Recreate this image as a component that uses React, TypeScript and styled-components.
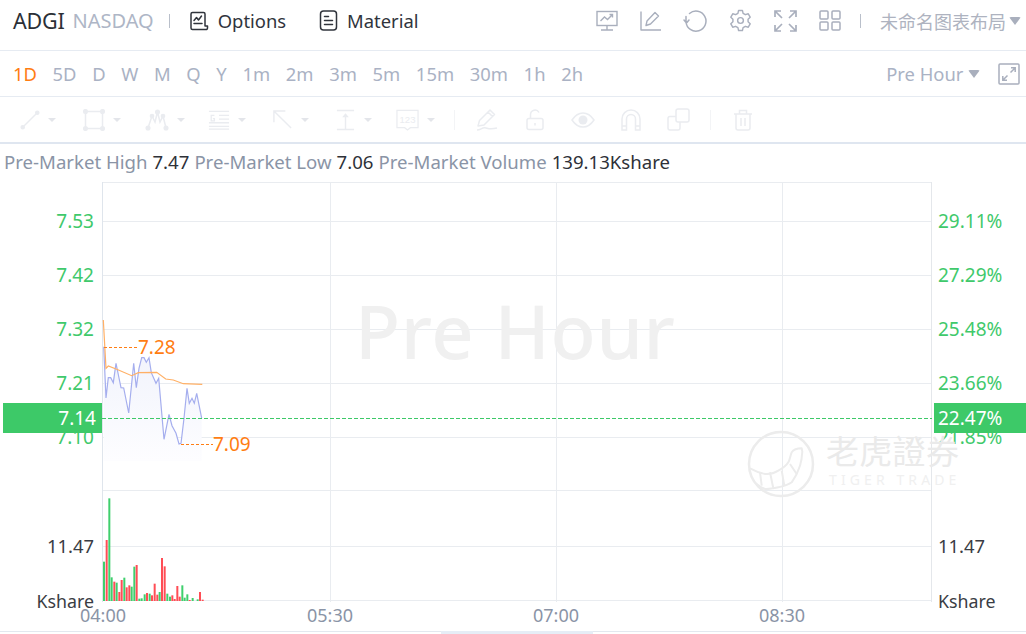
import styled, { createGlobalStyle } from "styled-components";

const GlobalStyle = createGlobalStyle`
  html, body {
    margin: 0;
    background: #fff;
    overflow: hidden;
  }
  body {
    font-family: "Noto Sans", "Noto Sans CJK SC", sans-serif;
  }
`;

const Page = styled.div`
  width: 1026px;
  height: 634px;
  display: flex;
  flex-direction: column;
  overflow: hidden;
`;

const TopBar = styled.div`
  height: 50px;
  flex: none;
  box-sizing: content-box;
  display: flex;
  align-items: center;
  padding: 0 5px 0 13px;
  border-bottom: 1px solid #e6ebf2;
`;

const TopBarInner = styled.div`
  flex: 1;
  display: flex;
  align-items: center;
  height: 42px;
  margin-bottom: 9px;
`;

const Symbol = styled.span`
  font-size: 21.5px;
  color: #2b2f36;
  letter-spacing: -0.2px;
`;

const Exchange = styled.span`
  font-size: 20px;
  color: #aeb6c6;
  margin-left: 8px;
`;

const Divider = styled.span<{ $left?: number; $right?: number }>`
  width: 1px;
  height: 14px;
  background: #b9bfca;
  margin-left: ${(p) => p.$left ?? 0}px;
  margin-right: ${(p) => p.$right ?? 0}px;
`;

const NavLink = styled.span<{ $gap: number }>`
  display: flex;
  align-items: center;
  gap: 9px;
  font-size: 18.4px;
  color: #30343c;
  margin-right: ${(p) => p.$gap}px;
`;

const Spacer = styled.div`
  flex: 1;
`;

const IconTray = styled.div`
  display: flex;
  align-items: center;
  gap: 22px;
  color: #a9afbd;
`;

const LayoutName = styled.span`
  font-size: 18px;
  color: #aeb3c0;
  white-space: nowrap;
  margin-right: 3px;
`;

const Caret = styled.span<{ $color?: string }>`
  width: 0;
  height: 0;
  border-left: 6px solid transparent;
  border-right: 6px solid transparent;
  border-top: 8px solid ${(p) => p.$color ?? "#a9afbd"};
  border-radius: 2px;
`;

const PeriodBar = styled.div`
  height: 45px;
  flex: none;
  display: flex;
  align-items: center;
  padding: 0 6px 0 13px;
  gap: 15.65px;
  border-bottom: 1px solid #e6ebf2;
`;

const Period = styled.span<{ $active?: boolean }>`
  font-size: 18.4px;
  color: ${(p) => (p.$active ? "#ff7d13" : "#aab2c4")};
`;

const PreHourMenu = styled.span`
  display: flex;
  align-items: center;
  gap: 5px;
  font-size: 18.4px;
  color: #aab2c4;
  margin-right: 2px;
`;

const ExpandBox = styled.span`
  display: flex;
  color: #a9afbd;
`;

const ToolBar = styled.div`
  height: 45px;
  flex: none;
  display: flex;
  align-items: center;
  padding-left: 20px;
  color: #eaecf0;
  border-bottom: 2px solid #dfe6f0;
`;

const Tool = styled.span<{ $width: number; $pad?: number }>`
  width: ${(p) => p.$width}px;
  padding-left: ${(p) => p.$pad ?? 0}px;
  flex: none;
  display: flex;
  align-items: center;
  gap: 8px;
`;

const ToolCaret = styled.span`
  width: 0;
  height: 0;
  border-left: 4px solid transparent;
  border-right: 4px solid transparent;
  border-top: 4px solid #e3e5ea;
`;

const ToolDivider = styled.span`
  width: 1px;
  height: 20px;
  background: #f3f4f6;
  flex: none;
`;

const InfoRow = styled.div`
  height: 38px;
  flex: none;
  display: flex;
  align-items: center;
  padding: 0 0 3px 4px;
  box-sizing: border-box;
  gap: 5px;
  font-size: 18.6px;
  white-space: nowrap;
`;

const InfoLabel = styled.span`
  color: #8a94a6;
`;

const InfoValue = styled.span`
  color: #2e3138;
`;

const ChartRow = styled.div`
  height: 420px;
  flex: none;
  display: flex;
  position: relative;
`;

const Axis = styled.div<{ $width: number }>`
  width: ${(p) => p.$width}px;
  flex: none;
  position: relative;
`;

const AxisLabel = styled.span<{ $side: "left" | "right"; $color: string; $size: number }>`
  position: absolute;
  ${(p) => (p.$side === "left" ? "right: 8px;" : "left: 6px;")}
  transform: translateY(-50%);
  font-size: ${(p) => p.$size}px;
  line-height: 22px;
  color: ${(p) => p.$color};
  white-space: nowrap;
`;

const Plot = styled.div`
  flex: 1;
  position: relative;
`;

const PlotSvg = styled.svg`
  display: block;
  width: 100%;
  height: 100%;
`;

const Watermark = styled.div`
  position: absolute;
  left: 253px;
  top: 99px;
  font-size: 74px;
  line-height: 100px;
  font-weight: 500;
  color: #f0f0f0;
  letter-spacing: 0.7px;
  white-space: nowrap;
`;

const Brand = styled.div`
  position: absolute;
  left: 747px;
  top: 248px;
  color: #eeeeee;
  display: flex;
  gap: 11px;
`;

const BrandText = styled.div`
  display: flex;
  flex-direction: column;
  padding-top: 3px;
`;

const BrandCn = styled.span`
  font-size: 33px;
  line-height: 38px;
  letter-spacing: 0.3px;
  color: #eaeaea;
  white-space: nowrap;
`;

const BrandEn = styled.span`
  font-size: 14px;
  line-height: 18px;
  letter-spacing: 4.1px;
  margin-left: 3px;
  color: #f0f0f0;
  white-space: nowrap;
`;

const PriceTag = styled.div<{ $side: "left" | "right" }>`
  position: absolute;
  top: 221px;
  ${(p) => (p.$side === "left" ? "left: 3px; width: 99px; padding-right: 6px; justify-content: flex-end;" : "left: 934px; width: 92px; padding-left: 4px;")}
  height: 30px;
  box-sizing: border-box;
  display: flex;
  align-items: center;
  background: #3dc968;
  color: #fff;
  font-size: 19px;
`;

const Callout = styled.span`
  position: absolute;
  font-size: 19px;
  line-height: 22px;
  color: #ff7d13;
  transform: translateY(-50%);
`;

const TimeAxis = styled.div`
  height: 29px;
  flex: none;
  position: relative;
  border-bottom: 1px solid #e3e8ef;
`;

const TimeLabel = styled.span`
  position: absolute;
  top: 0;
  transform: translateX(-50%);
  font-size: 18px;
  line-height: 26px;
  color: #8a94a6;
`;

const ScrollThumb = styled.div`
  position: absolute;
  left: 441px;
  bottom: -3px;
  width: 152px;
  height: 3px;
  background: #e6edf6;
`;

const GRID = "#e9ecf0";
const GREEN_TEXT = "#3fc96b";
const DARK_TEXT = "#3a3d44";

const leftLabels = [
  { y: 39, text: "7.53", color: GREEN_TEXT, size: 19 },
  { y: 93, text: "7.42", color: GREEN_TEXT, size: 19 },
  { y: 147, text: "7.32", color: GREEN_TEXT, size: 19 },
  { y: 201, text: "7.21", color: GREEN_TEXT, size: 19 },
  { y: 255, text: "7.10", color: GREEN_TEXT, size: 19 },
  { y: 364, text: "11.47", color: DARK_TEXT, size: 18.4 },
  { y: 419, text: "Kshare", color: DARK_TEXT, size: 17.8 },
];

const rightLabels = [
  { y: 39, text: "29.11%", color: GREEN_TEXT, size: 19 },
  { y: 93, text: "27.29%", color: GREEN_TEXT, size: 19 },
  { y: 147, text: "25.48%", color: GREEN_TEXT, size: 19 },
  { y: 201, text: "23.66%", color: GREEN_TEXT, size: 19 },
  { y: 255, text: "21.85%", color: GREEN_TEXT, size: 19 },
  { y: 364, text: "11.47", color: DARK_TEXT, size: 18.4 },
  { y: 419, text: "Kshare", color: DARK_TEXT, size: 17.8 },
];

// page coordinates, the plot svg has a matching viewBox
const pricePoints =
  "103.7,346.7 106,398 108.3,377.7 110.7,377.7 113.3,382.7 116,363.3 119,378 121,387.7 123.7,388 128.7,413 133.7,363.3 136.3,387.7 139,368.3 141.7,357.7 144,357.7 146.3,362.3 149,357.7 151.3,372.7 156,383.3 158.7,378.3 164,439.3 169,414.3 172,425.7 176,433.3 179,444 181,443.3 184,418.3 187,388.3 189.3,403.3 192,398.3 194.3,403.3 196.7,393.3 201.7,418.3";

const avgPoints =
  "103.3,320 106,368.3 108.3,366 116.7,369.3 131.7,375.7 138.3,372.7 156.7,372.3 165.7,379 173.3,380 183.3,383.7 202.3,384.3";

const bars: [string, number, number][] = [
  ["g", 24, 215], ["r", 32, 150], ["g", 40, 25], ["g", 47, 262], ["r", 55, 275], ["g", 62, 278],
  ["r", 70, 306], ["r", 77, 270], ["g", 85, 263], ["r", 92, 292], ["r", 100, 286], ["g", 107, 290],
  ["g", 115, 230], ["r", 122, 225], ["g", 130, 326], ["g", 137, 325], ["g", 146, 313], ["r", 153, 309],
  ["g", 161, 311], ["r", 168, 316], ["r", 176, 281], ["r", 184, 314], ["g", 191, 306], ["r", 198, 204],
  ["r", 206, 229], ["g", 214, 311], ["g", 222, 320], ["r", 229, 316], ["r", 236, 327], ["r", 244, 288],
  ["r", 251, 320], ["g", 259, 286], ["g", 266, 323], ["g", 274, 313], ["r", 281, 330], ["g", 290, 324],
  ["g", 305, 328], ["r", 312, 306], ["r", 320, 329],
];

const periods = ["1D", "5D", "D", "W", "M", "Q", "Y", "1m", "2m", "3m", "5m", "15m", "30m", "1h", "2h"];

const OptionsIcon = () => (
  <svg width="20" height="20" viewBox="0 0 20 20" fill="none" stroke="#30343c" strokeWidth="1.5" strokeLinejoin="round">
    <path d="M16 15V3a1.5 1.5 0 0 0-1.5-1.5h-11A1.5 1.5 0 0 0 2 3v14a1.5 1.5 0 0 0 1.5 1.5h13A1.5 1.5 0 0 0 18.500 17v-2z" />
    <path d="M5 9.500l2.500-3 2 2.500 3-4M5 12.500h8" strokeLinecap="round" />
  </svg>
);

const MaterialIcon = () => (
  <svg width="19" height="21" viewBox="0 0 19 21" fill="none" stroke="#30343c" strokeWidth="1.5" strokeLinecap="round">
    <rect x="1.500" y="1" width="16" height="19" rx="3" />
    <path d="M5.500 6.500h4M5.500 10.500h8M5.500 14.500h8" />
  </svg>
);

const ScreenIcon = () => (
  <svg width="22" height="21" viewBox="0 0 22 21" fill="none" stroke="currentColor" strokeWidth="1.4">
    <rect x="1" y="1.500" width="20" height="14" />
    <path d="M4.500 11l4-4 3 2.500 5-5M13.500 4.500h3v3M11 15.500V20M5 20h12" />
  </svg>
);

const EditIcon = () => (
  <svg width="21" height="21" viewBox="0 0 21 21" fill="none" stroke="currentColor" strokeWidth="1.4" strokeLinejoin="round">
    <path d="M1 1.500V20h20M6 15.500l1-4.500 8-8.500 3.500 3.500-8 8z" />
  </svg>
);

const UndoIcon = () => (
  <svg width="24" height="23" viewBox="0 0 24 23" fill="none" stroke="currentColor" strokeWidth="1.5" strokeLinecap="round">
    <path d="M6.500 4.500A10 10 0 1 1 3 13M3 7.500v5.500h0M1 11l2.500 3 2.500-3" />
  </svg>
);

const GearIcon = () => (
  <svg width="23" height="23" viewBox="0 0 24 24" fill="none" stroke="currentColor" strokeWidth="1.5" strokeLinejoin="round">
    <path d="M10 1.500h4l.7 3 2.400 1.400 3-.9 2 3.500-2.200 2.100v2.800l2.200 2.100-2 3.500-3-.9-2.400 1.400-.7 3h-4l-.7-3-2.400-1.400-3 .9-2-3.500 2.200-2.100v-2.800L1.900 8.500l2-3.500 3 .9 2.400-1.400z" />
    <circle cx="12" cy="12" r="3" />
  </svg>
);

const FitIcon = () => (
  <svg width="23" height="22" viewBox="0 0 23 22" fill="none" stroke="currentColor" strokeWidth="1.7">
    <path d="M1 7V1h6M1 1l7 7M22 7V1h-6M22 1l-7 7M1 15v6h6M1 21l7-7M22 15v6h-6M22 21l-7-7" />
  </svg>
);

const GridIcon = () => (
  <svg width="22" height="21" viewBox="0 0 22 21" fill="none" stroke="currentColor" strokeWidth="1.5">
    <rect x="1" y="1" width="8" height="8" rx="1" />
    <rect x="13" y="1" width="8" height="8" rx="1" />
    <rect x="1" y="12" width="8" height="8" rx="1" />
    <rect x="13" y="12" width="8" height="8" rx="1" />
  </svg>
);

const ExpandIcon = () => (
  <svg width="22" height="22" viewBox="0 0 22 22" fill="none" stroke="currentColor" strokeWidth="1.5">
    <rect x="1" y="1" width="20" height="20" rx="1" />
    <path d="M12.500 9.500L17 5M13 4.800h4.200V9M9.500 12.500L5 17M9 17.200H4.800V13" />
  </svg>
);

const LineTool = () => (
  <svg width="20" height="20" viewBox="0 0 22 22" fill="none" stroke="currentColor" strokeWidth="1.5">
    <path d="M3 19L19 3" />
    <circle cx="3" cy="19" r="1.800" fill="currentColor" />
    <circle cx="19" cy="3" r="1.800" fill="currentColor" />
  </svg>
);

const RectTool = () => (
  <svg width="22" height="22" viewBox="0 0 22 22" fill="none" stroke="currentColor" strokeWidth="1.5">
    <rect x="2.500" y="2.500" width="17" height="17" />
    <g fill="currentColor">
      <circle cx="2.500" cy="2.500" r="1.800" />
      <circle cx="19.500" cy="2.500" r="1.800" />
      <circle cx="2.500" cy="19.500" r="1.800" />
      <circle cx="19.500" cy="19.500" r="1.800" />
    </g>
  </svg>
);

const WaveTool = () => (
  <svg width="24" height="22" viewBox="0 0 24 22" fill="none" stroke="currentColor" strokeWidth="1.5">
    <path d="M3 19L7 7l3 6 2.500-10L15 13l3-6 3 12" />
    <g fill="currentColor">
      <circle cx="3" cy="19" r="1.800" />
      <circle cx="7" cy="7" r="1.600" />
      <circle cx="12.500" cy="3" r="1.800" />
      <circle cx="18" cy="7" r="1.600" />
      <circle cx="21" cy="19" r="1.800" />
    </g>
  </svg>
);

const TextLinesTool = () => (
  <svg width="22" height="22" viewBox="0 0 24 22" fill="none" stroke="currentColor" strokeWidth="1.4">
    <path d="M1 1.500h22M1 18h22M1 21h22M12 6h11M12 10h11M1 14h22" />
    <path d="M7 6H3.500v6H7V9.500H5.300" />
  </svg>
);

const ArrowTool = () => (
  <svg width="21" height="21" viewBox="0 0 22 22" fill="none" stroke="currentColor" strokeWidth="1.5">
    <path d="M2 14V2h12M2 2l18 18" />
  </svg>
);

const HeightTool = () => (
  <svg width="21" height="22" viewBox="0 0 22 22" fill="currentColor" stroke="currentColor" strokeWidth="1.5">
    <path d="M2 1h18M2 21h18M11 5v16" fill="none" />
    <path d="M7.500 8L11 4l3.500 4z" stroke="none" />
  </svg>
);

const LabelTool = () => (
  <svg width="23" height="24" viewBox="0 0 24 24" fill="none" stroke="currentColor" strokeWidth="1.300">
    <path d="M1 2h22v18h-8l-3 2.500L9 20H1z" />
    <text x="12" y="15" textAnchor="middle" fontSize="10" fontFamily="Liberation Sans" fill="currentColor" stroke="none">123</text>
  </svg>
);

const PenTool = () => (
  <svg width="24" height="24" viewBox="0 0 24 24" fill="none" stroke="currentColor" strokeWidth="1.500" strokeLinejoin="round">
    <path d="M3 18l1.500-5.500L15 2l4.500 4.500L9 17zM13 4l4.500 4.500M2 22c4 0 5-3 9-2s5 1.500 11 0" />
  </svg>
);

const LockTool = () => (
  <svg width="20" height="22" viewBox="0 0 20 22" fill="none" stroke="currentColor" strokeWidth="1.500">
    <rect x="2" y="9.500" width="16" height="11" rx="2" />
    <path d="M5.500 9.500V5.500a4.500 4.500 0 0 1 8.500-2M10 14v2.500" />
  </svg>
);

const EyeTool = () => (
  <svg width="24" height="16" viewBox="0 0 24 16" fill="none" stroke="currentColor" strokeWidth="1.500">
    <path d="M1 8c3-4.500 6.500-7 11-7s8 2.500 11 7c-3 4.500-6.500 7-11 7S4 12.500 1 8z" />
    <circle cx="12" cy="8" r="4.500" fill="currentColor" stroke="none" />
  </svg>
);

const MagnetTool = () => (
  <svg width="20" height="24" viewBox="0 0 20 24" fill="none" stroke="currentColor" strokeWidth="1.500">
    <path d="M1 22V11a9 9 0 0 1 18 0v11h-4.500V11a4.500 4.500 0 0 0-9 0v11zM1 18h4.500M14.500 18H19" />
  </svg>
);

const LayersTool = () => (
  <svg width="23" height="23" viewBox="0 0 23 23" fill="none" stroke="currentColor" strokeWidth="1.500">
    <rect x="9" y="1" width="13" height="13" rx="2" />
    <path d="M9 8.500H3a2 2 0 0 0-2 2V20a2 2 0 0 0 2 2h8a2 2 0 0 0 2-2v-6" />
  </svg>
);

const TrashTool = () => (
  <svg width="20" height="22" viewBox="0 0 20 22" fill="none" stroke="currentColor" strokeWidth="1.500">
    <path d="M1 5h18M6.500 5V1.500h7V5M3 5v14a2 2 0 0 0 2 2h10a2 2 0 0 0 2-2V5M8 9v8M12 9v8" />
  </svg>
);

const TigerLogo = () => (
  <svg width="68" height="68" viewBox="0 0 68 68" fill="none" stroke="#ececec" strokeWidth="2" strokeLinejoin="round">
    <circle cx="34" cy="34" r="32" strokeWidth="2.500" />
    <path d="M3 38.300C8 41 13 43 18 44c5 .5 9-.5 13.300-3.300 4.500-2.500 8-5 10-8.400 1.800-3 2-7 3.400-10 2-3 6-4 10-4l.600 3.400c-.3 5-1 10-2.300 14-2 6.500-5 12-8.300 16.600-4 3-9 4-13.400 5-4.500 1-9 2-13.300 1.700-3-1-6-3-8.300-5" />
    <path d="M13 42.300l1.700 13.400M23 42.300l3.300 16M34.700 40.700l2.600 15M43 34l6.700 10" />
  </svg>
);

export default function App() {
  const hLines = [221, 275, 329, 383, 437, 490, 546, 600];
  const vLines = [330, 556, 782];

  return (
    <Page>
      <GlobalStyle />
      <TopBar>
        <TopBarInner>
          <Symbol>ADGI</Symbol>
          <Exchange>NASDAQ</Exchange>
          <Divider $left={15} $right={19} />
          <NavLink $gap={33}>
            <OptionsIcon />
            Options
          </NavLink>
          <NavLink $gap={0}>
            <MaterialIcon />
            Material
          </NavLink>
          <Spacer />
          <IconTray>
            <ScreenIcon />
            <EditIcon />
            <UndoIcon />
            <GearIcon />
            <FitIcon />
            <GridIcon />
            <Divider $left={-3} $right={-3} />
            <LayoutName>未命名图表布局</LayoutName>
          </IconTray>
          <Caret />
        </TopBarInner>
      </TopBar>

      <PeriodBar>
        {periods.map((p, i) => (
          <Period key={p} $active={i === 0}>
            {p}
          </Period>
        ))}
        <Spacer />
        <PreHourMenu>
          Pre Hour
          <Caret />
        </PreHourMenu>
        <ExpandBox>
          <ExpandIcon />
        </ExpandBox>
      </PeriodBar>

      <ToolBar>
        <Tool $width={63}><LineTool /><ToolCaret /></Tool>
        <Tool $width={62}><RectTool /><ToolCaret /></Tool>
        <Tool $width={63}><WaveTool /><ToolCaret /></Tool>
        <Tool $width={64}><TextLinesTool /><ToolCaret /></Tool>
        <Tool $width={63}><ArrowTool /><ToolCaret /></Tool>
        <Tool $width={61}><HeightTool /><ToolCaret /></Tool>
        <Tool $width={58}><LabelTool /><ToolCaret /></Tool>
        <ToolDivider />
        <Tool $width={50} $pad={20}><PenTool /></Tool>
        <Tool $width={46}><LockTool /></Tool>
        <Tool $width={50}><EyeTool /></Tool>
        <Tool $width={46}><MagnetTool /></Tool>
        <Tool $width={43}><LayersTool /></Tool>
        <ToolDivider />
        <Tool $width={40} $pad={22}><TrashTool /></Tool>
      </ToolBar>

      <InfoRow>
        <InfoLabel>Pre-Market High</InfoLabel>
        <InfoValue>7.47</InfoValue>
        <InfoLabel>Pre-Market Low</InfoLabel>
        <InfoValue>7.06</InfoValue>
        <InfoLabel>Pre-Market Volume</InfoLabel>
        <InfoValue>139.13Kshare</InfoValue>
      </InfoRow>

      <ChartRow>
        <Axis $width={102}>
          {leftLabels.map((l) => (
            <AxisLabel key={l.text} $side="left" $color={l.color} $size={l.size} style={{ top: l.y }}>
              {l.text}
            </AxisLabel>
          ))}
        </Axis>
        <Plot>
          <PlotSvg viewBox="102 182 830 420">
            <defs>
              <linearGradient id="area" x1="0" y1="0" x2="0" y2="1">
                <stop offset="0" stopColor="#f1f3fc" />
                <stop offset="1" stopColor="#fdfdff" />
              </linearGradient>
            </defs>
            <g stroke={GRID} strokeWidth="1" shapeRendering="crispEdges">
              <path d="M102 182.500H932" />
              {hLines.map((y) => (
                <path key={y} d={`M102 ${y + 0.5}H932`} />
              ))}
              {vLines.map((x) => (
                <path key={x} d={`M${x + 0.5} 182V602`} />
              ))}
              <path d="M102.500 182V602" stroke="#dfe5ec" />
              <path d="M931.500 182V602" stroke="#e4e7eb" strokeWidth="2" />
            </g>
            <polygon points={`103.700,461 ${pricePoints} 201.700,461`} fill="url(#area)" />
            <polyline points={pricePoints} fill="none" stroke="#a5aeee" strokeWidth="1.200" />
            <polyline points={avgPoints} fill="none" stroke="#ffb066" strokeWidth="1.200" />
            <path d="M104 347.500H138M181 444.500H213" stroke="#ff7d13" strokeWidth="1" strokeDasharray="3 2" />
            <path d="M102 418.500H932" stroke="#3dc968" strokeWidth="1" strokeDasharray="4 2" />
            {bars.map(([c, zx, zy]) => (
              <rect
                key={zx}
                x={95 + zx / 3}
                y={490 + zy / 3}
                width="2"
                height={(333 - zy) / 3}
                fill={c === "g" ? "#3fcf6d" : "#ff4d55"}
              />
            ))}
          </PlotSvg>
          <Watermark>Pre Hour</Watermark>
        </Plot>
        <Axis $width={94}>
          {rightLabels.map((l) => (
            <AxisLabel key={l.text} $side="right" $color={l.color} $size={l.size} style={{ top: l.y }}>
              {l.text}
            </AxisLabel>
          ))}
        </Axis>
        <Brand>
          <TigerLogo />
          <BrandText>
            <BrandCn>老虎證券</BrandCn>
            <BrandEn>TIGER TRADE</BrandEn>
          </BrandText>
        </Brand>
        <PriceTag $side="left">7.14</PriceTag>
        <PriceTag $side="right">22.47%</PriceTag>
        <Callout style={{ left: 138, top: 165 }}>7.28</Callout>
        <Callout style={{ left: 213, top: 262 }}>7.09</Callout>
      </ChartRow>

      <TimeAxis>
        {[
          { x: 103, t: "04:00" },
          { x: 330, t: "05:30" },
          { x: 556, t: "07:00" },
          { x: 782, t: "08:30" },
        ].map((l) => (
          <TimeLabel key={l.t} style={{ left: l.x }}>
            {l.t}
          </TimeLabel>
        ))}
        <ScrollThumb />
      </TimeAxis>
    </Page>
  );
}
